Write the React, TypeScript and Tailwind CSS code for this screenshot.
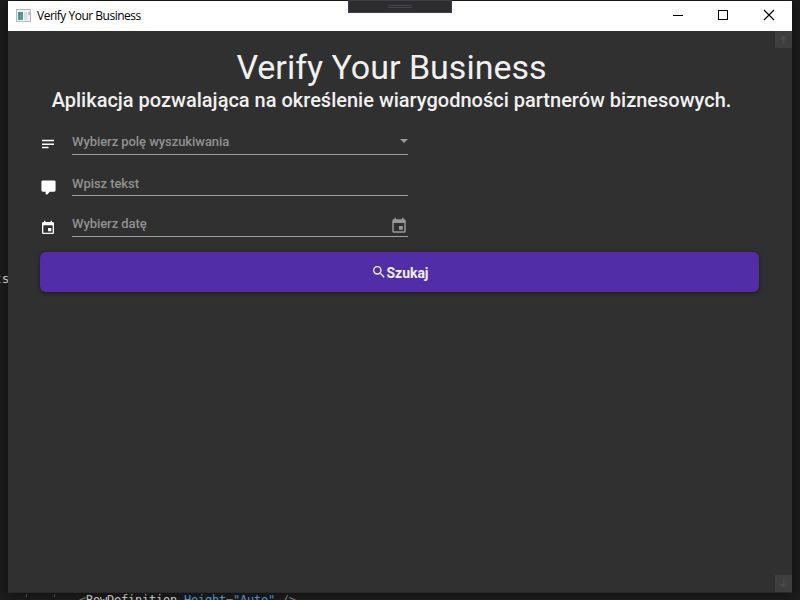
import type { ReactNode } from "react";

const CALENDAR =
  "M19 19H5V8H19M16 1V3H8V1H6V3H5C3.89 3 3 3.89 3 5V19A2 2 0 0 0 5 21H19A2 2 0 0 0 21 19V5C21 3.89 20.1 3 19 3H18V1M17 12H12V17H17V12Z";

function Glyph({ d, className }: { d: string; className: string }) {
  return (
    <svg viewBox="0 0 24 24" fill="currentColor" className={className}>
      <path d={d} />
    </svg>
  );
}

function TitleBar() {
  return (
    <header className="flex h-[30px] shrink-0 items-center bg-white text-black">
      <svg viewBox="0 0 16 14" className="ml-2 h-[14px] w-4" shapeRendering="crispEdges">
        <defs>
          <linearGradient id="pane" x1="0" y1="0" x2="1" y2="1">
            <stop offset="0" stopColor="#4f7fb0" />
            <stop offset="1" stopColor="#5cab7c" />
          </linearGradient>
        </defs>
        <path fill="#b4b9be" d="M0 0h15v13H0z" />
        <path fill="#eef0f3" d="M1 1h13v11H1z" />
        <path fill="url(#pane)" d="M2 3h5v8H2z" />
        <path fill="#d9dce2" d="M8 3h3v8H8z" />
        <path fill="#a9c9bd" d="M12 3h2v3h-2z" />
      </svg>
      <span className="ml-[5px] grow whitespace-nowrap font-['Open_Sans',sans-serif] text-[12px] leading-4 tracking-[-0.5px]">
        Verify Your Business
      </span>
      <svg viewBox="0 0 138 30" className="h-[30px] w-[138px]" fill="none" stroke="#000" shapeRendering="crispEdges">
        <path d="M19 14.5h10M64.500 9.500h9v9h-9z" />
        <path d="M110 9l10 10M120 9l-10 10" shapeRendering="auto" strokeWidth="1.1" />
      </svg>
    </header>
  );
}

function Field({
  icon,
  label,
  row,
  labelPad,
  children,
}: {
  icon: ReactNode;
  label: string;
  row: string;
  labelPad: string;
  children?: ReactNode;
}) {
  return (
    <div className={`flex w-[368px] ${row}`}>
      <div className="w-8 shrink-0 text-white">{icon}</div>
      <div className={`flex grow justify-between border-b border-[#a0a0a0] text-[#989898] ${labelPad}`}>
        <span className="whitespace-nowrap text-[13px] font-medium leading-4 tracking-[-0.06px] text-[#919191]">{label}</span>
        {children}
      </div>
    </div>
  );
}

export default function App() {
  return (
    <div className="relative flex h-[600px] w-[800px] flex-col overflow-hidden bg-[#1b1b1b] pt-px font-['Roboto',sans-serif]">
      <span className="absolute -left-[6px] top-[271px] font-['DejaVu_Sans_Mono',monospace] text-[13px] leading-4 text-[#d8d8d8]">
        <span className="text-[#c08a60]">t</span>s
      </span>
      <section className="z-10 mx-2 flex h-[592px] flex-col bg-[#303030] shadow-[0_1px_8px_rgba(0,0,0,0.4)]">
        <TitleBar />
        <div className="flex min-h-0 grow border-b border-[#292929]">
          <main className="flex grow flex-col pl-8 pt-[16px] text-[#f0f0f0]">
            <h1 className="w-[703px] whitespace-nowrap text-center text-[34px] leading-[40px]">Verify Your Business</h1>
            <h2 className="w-[703px] whitespace-nowrap text-center text-[20px] font-medium leading-[26px]">
              Aplikacja pozwalająca na określenie wiarygodności partnerów biznesowych.
            </h2>
            <Field
              label="Wybierz polę wyszukiwania"
              row="mt-[17px] h-[25px]"
              labelPad="pt-[4px]"
              icon={
                <svg viewBox="0 0 16 16" fill="none" stroke="currentColor" className="mt-[6px] size-4">
                  <path d="M2 4.500h12M2 8.200h12M2 11.500h6.500" strokeWidth="1.35" />
                </svg>
              }
            >
              <svg viewBox="0 0 8 4" fill="currentColor" className="mt-[5px] h-1 w-2">
                <path d="M0 0h8L4 4Z" />
              </svg>
            </Field>
            <Field
              label="Wpisz tekst"
              row="mt-[16px] h-[25px]"
              labelPad="pt-[5px]"
              icon={
                <Glyph
                  d="M9 22a1 1 0 0 1-1-1v-3H4a2 2 0 0 1-2-2V4c0-1.110.900-2 2-2h16a2 2 0 0 1 2 2v12a2 2 0 0 1-2 2h-6.100l-3.700 3.710c-.200.190-.450.290-.700.290H9Z"
                  className="-ml-[0.5px] mt-2 size-[17px]"
                />
              }
            />
            <Field
              label="Wybierz datę"
              row="mt-[16px] h-[25px]"
              labelPad="pt-[4px]"
              icon={<Glyph d={CALENDAR} className="mt-2 size-4" />}
            >
              <Glyph d={CALENDAR} className="mt-px size-[18px]" />
            </Field>
            <button className="mt-[15px] flex h-10 w-[719px] items-center justify-center rounded-md bg-[#512da8] text-[14px] font-bold leading-4 shadow-[0_1px_4px_rgba(0,0,0,0.5)]">
              <Glyph
                d="M9.500 3A6.500 6.500 0 0 1 16 9.500c0 1.610-.590 3.090-1.560 4.230l.270.270h.790l5 5-1.500 1.500-5-5v-.790l-.270-.270A6.516 6.516 0 0 1 9.500 16a6.500 6.500 0 0 1 0-13m0 2C7 5 5 7 5 9.500S7 14 9.500 14 14 12 14 9.500 12 5 9.500 5Z"
                className="size-4"
              />
              <span className="pt-[2px] tracking-[-0.05px]">Szukaj</span>
            </button>
          </main>
          <aside className="flex w-[17px] flex-col justify-between text-[#4b4b4b]">
            <div className="flex size-[17px] items-center justify-center bg-[#3e3e3e]">
              <Glyph d="M10 21V9l-5 5V10l7-7 7 7v4l-5-5v12Z" className="size-[11px]" />
            </div>
            <div className="flex size-[17px] items-center justify-center bg-[#3e3e3e]">
              <Glyph d="M10 3v12l-5-5v4l7 7 7-7v-4l-5 5V3Z" className="size-[11px]" />
            </div>
          </aside>
        </div>
      </section>
      <div className="absolute left-[348px] top-0 z-20 flex h-[13px] w-[104px] flex-col items-center gap-px border border-[#3f3f46] bg-[#2d2d30] pt-[4px]">
        <i className="h-px w-6 bg-[#46464a]" />
        <i className="h-px w-6 bg-[#46464a]" />
      </div>
      <i className="absolute left-[26px] top-[594px] h-[3px] w-px bg-[#555]" />
      <i className="absolute left-[54px] top-[594px] h-[3px] w-px bg-[#555]" />
      <code className="absolute left-[79px] top-[593px] whitespace-pre font-['DejaVu_Sans_Mono',monospace] text-[12px] leading-[14px] tracking-[-0.23px] text-[#d0d0d0]">
        <span className="text-[#808080]">&lt;</span>RowDefinition <span className="text-[#569cd6]">Height</span>
        <span className="text-[#808080]">=</span>
        <span className="text-[#569cd6]">"Auto"</span>
        <span className="text-[#808080]"> /&gt;</span>
      </code>
    </div>
  );
}
